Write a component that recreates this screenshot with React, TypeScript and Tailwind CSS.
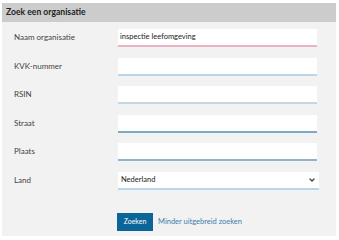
import { ChevronDown } from "lucide-react";

const fields = [
  { label: "Naam organisatie", value: "inspectie leefomgeving", border: "border-[#e9b3c0]" },
  { label: "KVK-nummer", value: "", border: "border-[#b9d6e8]" },
  { label: "RSIN", value: "", border: "border-[#c3d7e5]" },
  { label: "Straat", value: "", border: "border-[#7fa9c2]" },
  { label: "Plaats", value: "", border: "border-[#8fb3c9]" },
];

export default function App() {
  return (
    <div className="w-[339px] h-[240px] bg-white pt-[3px] px-[2px] font-['Lato','Liberation_Sans',sans-serif] text-[8px] text-[#444]">
      <div className="w-[334px] h-[233px] bg-[#f2f2f2] flex flex-col">
        {/* Header */}
        <div className="h-[19px] bg-[#cccccc] flex items-center px-[4px]">
          <span className="font-bold text-[8.6px] text-[#222]">Zoek een organisatie</span>
        </div>

        {/* Form */}
        <div className="flex flex-col gap-[10.5px] pt-[7px] pl-[12px]">
          {fields.map((f) => (
            <div key={f.label} className="flex">
              <label className="w-[104px] pt-[2px] leading-[12px]">{f.label}</label>
              <div
                className={`w-[199px] h-[18px] bg-white border-b-2 ${f.border} flex items-center px-[2px] text-[7.5px] text-[#222]`}
              >
                {f.value}
              </div>
            </div>
          ))}
          <div className="flex">
            <label className="w-[104px] pt-[2px] leading-[12px]">Land</label>
            <div className="w-[201px] h-[18px] bg-white border-b-2 border-[#b9d6e8] flex items-center justify-between px-[3px] text-[7.5px] text-[#222]">
              <span>Nederland</span>
              <ChevronDown className="w-[8px] h-[8px] text-[#444]" strokeWidth={4} />
            </div>
          </div>
        </div>

        {/* Actions */}
        <div className="flex items-center gap-[5px] pl-[115px] mt-[23px]">
          <button className="w-[36px] h-[18px] bg-[#0b6596] text-white text-[7px] flex items-center justify-center">
            Zoeken
          </button>
          <a className="text-[7.5px] text-[#3a7fad]">Minder uitgebreid zoeken</a>
        </div>
      </div>
    </div>
  );
}
